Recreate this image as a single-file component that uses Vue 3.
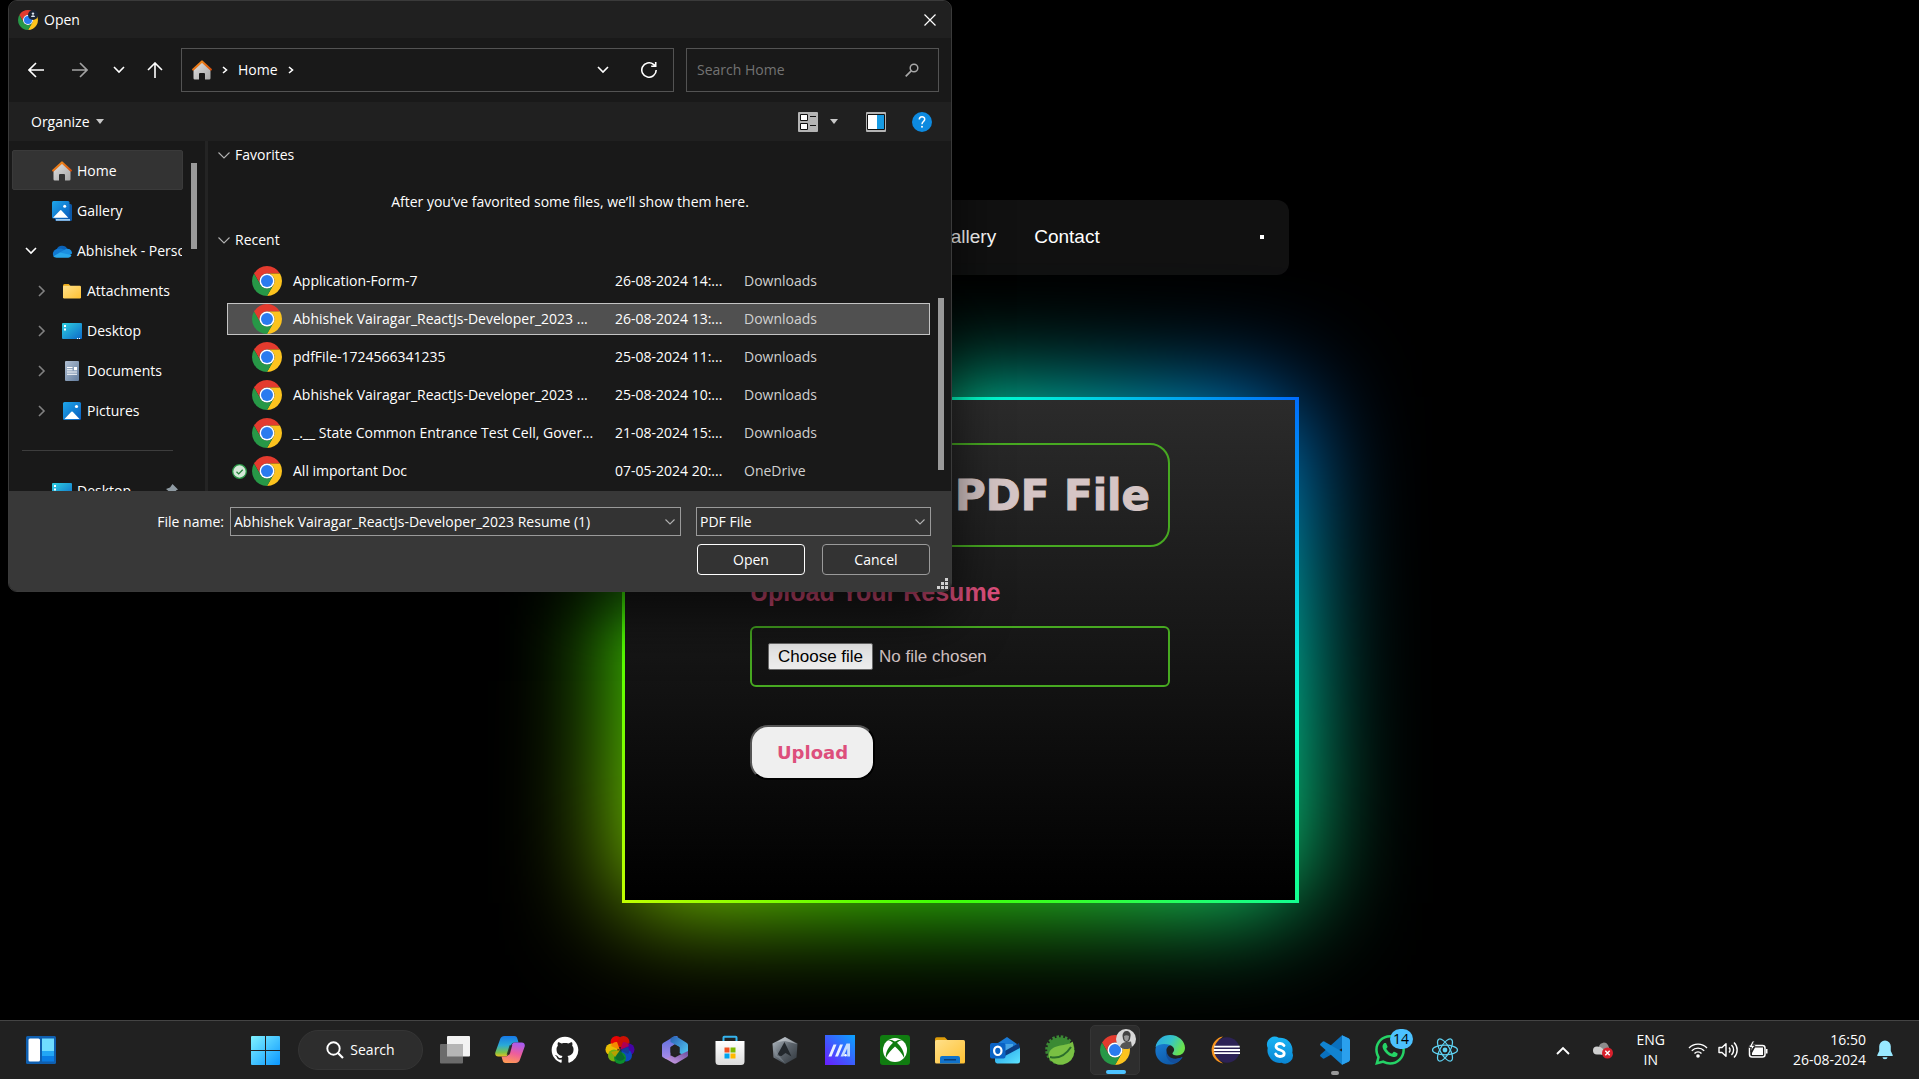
<script setup>
import { ref } from 'vue'

const picker = ref(null)
const fileName = ref('Abhishek Vairagar_ReactJs-Developer_2023 Resume (1)')

const places = [
  { label: 'Home', icon: 'house', active: true },
  { label: 'Gallery', icon: 'gallery' },
  { label: 'Abhishek - Personal', icon: 'onedrive', arrow: 'open' },
  { label: 'Attachments', icon: 'folder', arrow: 'closed', child: true },
  { label: 'Desktop', icon: 'desktop', arrow: 'closed', child: true },
  { label: 'Documents', icon: 'documents', arrow: 'closed', child: true },
  { label: 'Pictures', icon: 'pictures', arrow: 'closed', child: true },
]

const recent = [
  { name: 'Application-Form-7', date: '26-08-2024 14:...', place: 'Downloads' },
  { name: 'Abhishek Vairagar_ReactJs-Developer_2023 ...', date: '26-08-2024 13:...', place: 'Downloads', selected: true },
  { name: 'pdfFile-1724566341235', date: '25-08-2024 11:...', place: 'Downloads' },
  { name: 'Abhishek Vairagar_ReactJs-Developer_2023 ...', date: '25-08-2024 10:...', place: 'Downloads' },
  { name: '_.__ State Common Entrance Test Cell, Gover...', date: '21-08-2024 15:...', place: 'Downloads' },
  { name: 'All important Doc', date: '07-05-2024 20:...', place: 'OneDrive', synced: true },
]

const apps = [
  { id: 'taskview', label: 'Task view' },
  { id: 'copilot', label: 'Copilot' },
  { id: 'github', label: 'GitHub' },
  { id: 'flower', label: 'Photos' },
  { id: 'm365', label: 'Microsoft 365' },
  { id: 'store', label: 'Microsoft Store' },
  { id: 'armoury', label: 'Armoury Crate' },
  { id: 'myasus', label: 'MyASUS' },
  { id: 'xbox', label: 'Xbox' },
  { id: 'explorer', label: 'File Explorer' },
  { id: 'outlook', label: 'Outlook' },
  { id: 'spring', label: 'Spring Tools' },
  { id: 'chrome', label: 'Chrome', state: 'current' },
  { id: 'edge', label: 'Edge' },
  { id: 'eclipse', label: 'Eclipse' },
  { id: 'skype', label: 'Skype' },
  { id: 'vscode', label: 'VS Code', state: 'running' },
  { id: 'whatsapp', label: 'WhatsApp', badge: '14' },
  { id: 'react', label: 'React' },
]
</script>

<template>
  <div class="screen">
    <svg class="defs" width="0" height="0" aria-hidden="true">
      <defs>
        <linearGradient id="gRoof" x1="0" y1="0" x2="1" y2="1"><stop offset="0" stop-color="#f7931e" /><stop offset="1" stop-color="#d4500c" /></linearGradient>
        <linearGradient id="gWall" x1="0" y1="0" x2="1" y2="1"><stop offset="0" stop-color="#e2e2e2" /><stop offset="1" stop-color="#a8a8a8" /></linearGradient>
        <linearGradient id="gBlue" x1="0" y1="0" x2="1" y2="1"><stop offset="0" stop-color="#1ea7ea" /><stop offset="1" stop-color="#0a5cbd" /></linearGradient>
        <linearGradient id="gDesk" x1="0" y1="0" x2="1" y2="1"><stop offset="0" stop-color="#2fd0e0" /><stop offset="1" stop-color="#0c68c8" /></linearGradient>
        <linearGradient id="gDoc" x1="0" y1="0" x2="1" y2="1"><stop offset="0" stop-color="#b0bfd2" /><stop offset="1" stop-color="#637d9e" /></linearGradient>
        <linearGradient id="gFolder" x1="0" y1="0" x2="1" y2="1"><stop offset="0" stop-color="#ffe08a" /><stop offset="1" stop-color="#ffc132" /></linearGradient>
        <linearGradient id="gWin" x1="0" y1="0" x2="1" y2="1"><stop offset="0" stop-color="#80f2ff" /><stop offset="1" stop-color="#0a97ff" /></linearGradient>
        <linearGradient id="gCopA" x1="0" y1="0" x2="0" y2="1"><stop offset="0" stop-color="#1679e8" /><stop offset="0.45" stop-color="#2aa9d8" /><stop offset="0.8" stop-color="#7bc24a" /><stop offset="1" stop-color="#e8c020" /></linearGradient>
        <linearGradient id="gCopB" x1="0.6" y1="0" x2="0.3" y2="1"><stop offset="0" stop-color="#a95bee" /><stop offset="0.5" stop-color="#ee5d9c" /><stop offset="1" stop-color="#ff9a55" /></linearGradient>
        <linearGradient id="gM1" x1="0" y1="0" x2="0" y2="1"><stop offset="0" stop-color="#5b6fe0" /><stop offset="1" stop-color="#a98be8" /></linearGradient>
        <linearGradient id="gM2" x1="0" y1="0" x2="1" y2="1"><stop offset="0" stop-color="#2a5fb4" /><stop offset="1" stop-color="#54d0f7" /></linearGradient>
        <linearGradient id="gM3" x1="0" y1="1" x2="1" y2="0"><stop offset="0" stop-color="#d6a8ee" /><stop offset="1" stop-color="#6a4a9c" /></linearGradient>
        <linearGradient id="gArm" x1="0" y1="0" x2="1" y2="1"><stop offset="0" stop-color="#b9c2ca" /><stop offset="0.5" stop-color="#5c646c" /><stop offset="1" stop-color="#2f353b" /></linearGradient>
        <linearGradient id="gAsus" x1="0" y1="1" x2="1" y2="0"><stop offset="0" stop-color="#6a1cff" /><stop offset="1" stop-color="#0aa4ff" /></linearGradient>
        <linearGradient id="gOut" x1="0" y1="0" x2="1" y2="1"><stop offset="0" stop-color="#1c9be6" /><stop offset="1" stop-color="#5fe4ff" /></linearGradient>
        <linearGradient id="gEdgeA" x1="0" y1="0" x2="1" y2="0.4"><stop offset="0" stop-color="#2aa6e8" /><stop offset="0.55" stop-color="#35c4c8" /><stop offset="1" stop-color="#6ae24e" /></linearGradient>
        <linearGradient id="gEdgeB" x1="0" y1="0" x2="0.5" y2="1"><stop offset="0" stop-color="#1b84dd" /><stop offset="1" stop-color="#0f5aa8" /></linearGradient>
        <linearGradient id="gSkype" x1="0" y1="0" x2="0" y2="1"><stop offset="0" stop-color="#19b5f5" /><stop offset="1" stop-color="#0a84d2" /></linearGradient>
        <linearGradient id="gBag" x1="0" y1="0" x2="0" y2="1"><stop offset="0" stop-color="#ffffff" /><stop offset="1" stop-color="#dcdcdc" /></linearGradient>
      </defs>

      <symbol id="chrome" viewBox="0 0 48 48">
        <path fill="#e33b2e" d="M24 12h20.78A24 24 0 0 0 3.22 12l10.39 18A12 12 0 0 1 24 12z" />
        <path fill="#fcc31e" d="M34.39 30 24 48a24 24 0 0 0 20.78-36H24a12 12 0 0 1 10.39 18z" />
        <path fill="#279847" d="M13.61 30 3.22 12A24 24 0 0 0 24 48l10.39-18a12 12 0 0 1-20.78 0z" />
        <circle cx="24" cy="24" r="12" fill="#fff" /><circle cx="24" cy="24" r="9.6" fill="#2a7bef" />
      </symbol>
      <symbol id="house" viewBox="0 0 20 20">
        <path fill="url(#gWall)" d="M1.5 9 10 1.5 18.5 9v9.2a1.3 1.3 0 0 1-1.3 1.3H13V14a1 1 0 0 0-1-1H8a1 1 0 0 0-1 1v5.5H2.800a1.300 1.300 0 0 1-1.300-1.300z" />
        <path fill="none" stroke="url(#gRoof)" stroke-width="2.2" stroke-linecap="round" stroke-linejoin="round" d="m1.200 9.500 8.800-8 8.800 8" />
      </symbol>
      <symbol id="gallery" viewBox="0 0 20 20">
        <rect x="3" y="3" width="17" height="17" rx="1.5" fill="#0b58a8" /><path fill="#9cc9ee" d="M4 18h14v1.800H4z" />
        <rect width="17.5" height="17.5" rx="1.5" fill="url(#gBlue)" /><path fill="#fff" d="m1 16.800 7-7.300a1 1 0 0 1 1.500 0l6.800 7.300z" /><circle cx="12.7" cy="5.2" r="1.5" fill="#fff" />
      </symbol>
      <symbol id="pictures" viewBox="0 0 20 20">
        <rect x="1" y="1" width="18" height="18" rx="1.5" fill="url(#gBlue)" /><path fill="#fff" d="m2.500 18 6.800-7.200a1 1 0 0 1 1.400 0l6.800 7.200z" /><circle cx="14.5" cy="5.5" r="1.6" fill="#fff" />
      </symbol>
      <symbol id="onedrive" viewBox="0 0 20 20">
        <path fill="#0a62b8" d="M4.500 8.500A6 6 0 0 1 15.500 8l-6 6H3z" /><path fill="#1178d0" d="M4.800 8A5 5 0 0 0 2 16l8-2 3-5-4-1.500z" /><path fill="#1b8fe0" d="M20 12.500A4.500 4.500 0 0 0 13 8.500L7 12l8 4z" /><path fill="#29a8ec" d="M2.500 16.200a5 5 0 0 1-1-1L8 11.500 19.500 14a3.500 3.500 0 0 1-3.200 2.700H4.500a5 5 0 0 1-2-.5z" />
      </symbol>
      <symbol id="folder" viewBox="0 0 20 20">
        <path fill="#e9a918" d="M1 4.500A1.500 1.500 0 0 1 2.500 3h4.200L8.500 5v3H1z" /><rect x="1" y="4.8" width="18" height="12.7" rx="1.2" fill="url(#gFolder)" />
      </symbol>
      <symbol id="desktop" viewBox="0 0 20 20">
        <rect y="2" width="20" height="16" rx="1" fill="url(#gDesk)" /><path fill="#fff" d="M2 4h2v2H2zM2 7.500h2v2H2zM15 17h1v1h-1zM17 17h1v1h-1z" />
      </symbol>
      <symbol id="documents" viewBox="0 0 20 20">
        <rect x="3" width="14" height="20" rx="1" fill="url(#gDoc)" /><path fill="#fff" d="M5 6h5.500v1H5zM5 8.300h5.500v1H5zM12 6h3v3.300h-3zM5 10.600h10v1H5zM5 12.800h10v1H5z" />
      </symbol>

      <symbol id="widgets" viewBox="0 0 30 28">
        <rect width="30" height="28" rx="1.5" fill="#0f5fb0" /><rect x="2.5" y="2.5" width="11.5" height="23" rx="1.5" fill="#fff" /><path fill="#6fdcff" d="M16 2.500h12V15H16z" /><path fill="#22a6f5" d="M16 15h12v5H16z" /><path fill="#0a7de4" d="M16 20h12v5.500H16z" />
      </symbol>
      <symbol id="windows" viewBox="0 0 29 29">
        <path fill="url(#gWin)" d="M1 0h13v14H0V1a1 1 0 0 1 1-1zM15 0h13a1 1 0 0 1 1 1v13H15zM0 15h14v14H1a1 1 0 0 1-1-1zM15 15h14v13a1 1 0 0 1-1 1H15z" />
      </symbol>
      <symbol id="taskview" viewBox="0 0 30 30">
        <rect x="7" y="1" width="23" height="20.5" rx="1" fill="#f2f2f2" /><rect y="9" width="23" height="19.5" rx="1" fill="#6b6b6b" /><path fill="#b5b5b5" d="M7 9h16v12.500H7z" />
      </symbol>
      <symbol id="copilot" viewBox="0 0 30 30">
        <path fill="url(#gCopA)" d="M9.500 1h9.800c2 0 2.700 1.200 3.200 3l1 3.500h-3.800c-2 0-3.200 1-3.800 3l-2.700 8.500C12.500 21 11.300 21.500 9.500 21.500H3.300C.8 21.500-.3 19.500.4 17.200L5 4.500C5.700 2.200 7 1 9.500 1z" />
        <path fill="url(#gCopB)" d="M20.500 28h-9.800c-2 0-2.700-1.200-3.200-3l-1-3.500h3.800c2 0 3.200-1 3.800-3l2.700-8.500c.7-2 1.900-2.500 3.700-2.500h6.200c2.500 0 3.600 2 2.900 4.300L25 24.500c-.7 2.300-2 3.500-4.500 3.500z" />
        <path fill="#232323" d="M14.600 10.200h2.700L15 18.500c-.2.800-.7 1.200-1.400 1.200h-2z" opacity="0.85" />
      </symbol>
      <symbol id="github" viewBox="-1 -1 18 18">
        <path fill="#fff" d="M8 0C3.580 0 0 3.580 0 8c0 3.540 2.290 6.530 5.470 7.590.4.070.55-.17.55-.38 0-.19-.01-.82-.01-1.490-2.010.37-2.530-.49-2.690-.94-.09-.23-.48-.94-.82-1.130-.28-.15-.68-.52-.01-.53.63-.01 1.080.58 1.230.82.72 1.210 1.870.87 2.330.66.070-.52.280-.87.510-1.070-1.780-.2-3.640-.89-3.640-3.950 0-.87.310-1.590.820-2.150-.08-.2-.36-1.020.080-2.120 0 0 .67-.21 2.200.82.640-.18 1.320-.27 2-.27s1.360.09 2 .27c1.530-1.040 2.200-.82 2.200-.82.440 1.100.160 1.920.080 2.120.510.560.820 1.270.820 2.150 0 3.070-1.870 3.750-3.650 3.950.290.250.540.730.540 1.480 0 1.070-.01 1.930-.01 2.200 0 .21.150.46.550.38A8.010 8.010 0 0 0 16 8c0-4.420-3.580-8-8-8z" />
      </symbol>
      <symbol id="flower" viewBox="0 0 30 30">
        <g opacity="0.9"><circle cx="11.5" cy="7" r="6" fill="#f00" /><circle cx="18.5" cy="7" r="6" fill="#e01000" /><circle cx="23.5" cy="14.5" r="6" fill="#4a00b4" /><circle cx="6.5" cy="14.5" r="6" fill="#ffd000" /><circle cx="21" cy="20.5" r="6" fill="#0a4fd0" /><circle cx="9" cy="20.5" r="6" fill="#7cc010" /><circle cx="15" cy="23" r="6" fill="#0a9a30" /></g>
        <path fill="#f58a00" d="M15 15 6 11a6 6 0 0 1 6-4z" /><path fill="#b00050" d="m15 15 9-4a6 6 0 0 0-6-4z" /><path fill="#143a9a" d="m15 15 8 4a6 6 0 0 0 0-7z" /><path fill="#0b6a30" d="m15 15-5 8a6 6 0 0 0 10 0z" /><path fill="#b8a000" d="m15 15-9 2 4 5z" />
      </symbol>
      <symbol id="m365" viewBox="0 0 30 30">
        <path fill="url(#gM1)" d="M15 1 3.500 7.700A2.500 2.500 0 0 0 2 10v10.500c0 1 .5 1.700 1.300 2.100l2.200 1.200c2 1 5-.3 5-3.500V12l7-4.500V1z" /><path fill="url(#gM2)" d="M13.500 1.500a3 3 0 0 1 3 0L26.500 7.700A2.500 2.500 0 0 1 28 10v10.500l-2.500 1-6-3.500v-6L10.500 7V4c0-1.200 2-2 3-2.500z" /><path fill="url(#gM3)" d="M28 16v4.300c0 .8-.4 1.400-1 1.700l-10.500 6.300a3 3 0 0 1-3 0L4 22.800c3 1.200 5.500-.3 6.500-2.500l4.500 2.200 4.500-2.500z" /><path fill="#232323" d="m15 9.800 4.500 2.600v5.200L15 20.200l-4.500-2.600v-5.200z" />
      </symbol>
      <symbol id="store" viewBox="0 0 30 30">
        <path fill="none" stroke="#35b4ee" stroke-width="2" d="M8.500 7V2.500a.8.800 0 0 1 .8-.8h11.400a.8.800 0 0 1 .8.800V7" /><path fill="url(#gBag)" d="M.5 6h29v20.500A3.500 3.500 0 0 1 26 30H4a3.500 3.500 0 0 1-3.500-3.500z" /><path fill="#f25022" d="M9.500 12.500h5v5h-5z" /><path fill="#7fba00" d="M15.500 12.500h5v5h-5z" /><path fill="#00a4ef" d="M9.500 18.500h5v5h-5z" /><path fill="#ffb900" d="M15.500 18.500h5v5h-5z" />
      </symbol>
      <symbol id="armoury" viewBox="0 0 30 30">
        <path fill="url(#gArm)" d="m15 2 12.500 6.500-1 14L15 29 3.500 22.500l-1-14z" /><path fill="#23282d" d="M14.500 7 7 20.500l4.500.5 4-3 6 3.500z" /><path fill="#8c959d" d="m2.500 9 3 12L15 28l-6-7.500z" opacity="0.5" /><path fill="#dfe4e8" d="m15 2-8 5 8-1 12 3z" opacity="0.5" />
      </symbol>
      <symbol id="myasus" viewBox="0 0 30 30">
        <path fill="url(#gAsus)" d="M0 0h30v30H0z" /><path fill="#e8f0ff" d="m3.500 21.500 5-12h3l-5 12zM10 21.500l5-12h3l-5 12z" /><path fill="#c4dcff" d="M15.500 21.500 21.500 8.500H25v13h-2.800v-8l-3.700 8z" /><circle cx="20.5" cy="20.3" r="1.3" fill="#fff" />
      </symbol>
      <symbol id="xbox" viewBox="0 0 30 30">
        <rect width="30" height="30" rx="3" fill="#107c10" /><circle cx="15" cy="15" r="12" fill="#fff" /><path fill="#107c10" d="M7.500 5.200C10 4 12.500 5 15 6.600 17.500 5 20 4 22.500 5.200c-2-.2-4.200 1.300-5.500 2.600 4 3.700 7.500 8.700 7.200 15.200-2-4.500-5.800-8.500-9.200-11.500-3.400 3-7.200 7-9.200 11.500C5.500 16.500 9 11.500 13 7.800 11.700 6.500 9.500 5 7.500 5.200z" />
      </symbol>
      <symbol id="explorer" viewBox="0 0 30 30">
        <path fill="#dd9c0a" d="M0 4a1.800 1.800 0 0 1 1.800-1.800h8L12.500 5v4H0z" /><rect y="5" width="30" height="23.5" rx="1.5" fill="url(#gFolder)" /><path fill="#1173cc" d="M5 28.500V23a2 2 0 0 1 2-2h16a2 2 0 0 1 2 2v5.500z" /><path fill="#0a3f78" d="M9 24h12v1.500H9z" />
      </symbol>
      <symbol id="outlook" viewBox="0 0 30 30">
        <path fill="#1a7bd6" d="M5 10 17 2l12 8.500v5H5z" /><path fill="#8ee5ff" d="M8 9h15v9H8z" opacity="0.4" /><path fill="url(#gOut)" d="M5 17 30 12v14a2.500 2.500 0 0 1-2.500 2.500H7A2.500 2.500 0 0 1 5 26z" /><path fill="#0a3c82" d="m13 17 16-9 1 5-17 9z" /><rect y="8" width="15.5" height="15.5" rx="2" fill="#0a62c4" /><ellipse cx="7.8" cy="15.8" rx="3.7" ry="4.2" fill="none" stroke="#fff" stroke-width="2.2" />
      </symbol>
      <symbol id="spring" viewBox="0 0 30 30">
        <circle cx="15" cy="15" r="12.8" fill="#3b8a34" /><circle cx="15" cy="15" r="13.3" fill="none" stroke="#3b8a34" stroke-width="3" stroke-dasharray="2.5 1.7" /><path fill="#232323" d="M30 8v6l-5 3-1-9z" opacity="0.5" /><path fill="#79c043" d="M27.500 6.500C22 12 8 8 4 18c-1 3 0 6.500 3 8.500a13.500 13.500 0 0 0 22-8c.7-4-.2-8.500-1.500-12z" /><path fill="none" stroke="#2b6e2c" stroke-width="2" d="M5 22c8 2 15-1 21-10" />
      </symbol>
      <symbol id="edge" viewBox="0 0 30 30">
        <path fill="url(#gEdgeB)" d="M1 11.500C3 4 9 1 15 2c6 1 8 6 7 9.500-4-4-12-1-10.500 6C12.500 23 18 26.500 27.500 22 23 29.500 15 31 9 28.500 2 25.500-1 18.500 1 11.500z" /><path fill="url(#gEdgeA)" d="M.5 12C2 4.500 8 0 15 0c9 0 15 6.500 15 13 0 4.500-3.500 7.500-8 7.500-3 0-5-1-4.500-2.500C19 16.500 20 14.500 18 12 15 8.500 5 7.500.5 12z" /><path fill="#134f9c" d="M11.500 14C9.500 20.500 13 27.500 20 28.500c3-1 6-3.500 7.500-6.500-9 4-16.500.5-16-8z" />
      </symbol>
      <symbol id="eclipse" viewBox="0 0 30 30">
        <path fill="#f7941e" d="M13 1.500a13.700 13.700 0 0 0 0 27 16 16 0 0 1 0-27z" /><circle cx="17" cy="15" r="12.8" fill="#2c2255" /><path fill="#fff" d="M4.300 10.800h25.400v1.800H4zM3.800 14h26.400v1.900H3.800zM4 17.300h26v1.800H4.300z" />
      </symbol>
      <symbol id="skype" viewBox="0 0 30 30">
        <path fill="url(#gSkype)" d="M9.500 1.500a8 8 0 0 1 4.300 1.200A12.500 12.500 0 0 1 27.300 17.500 8 8 0 0 1 16.500 27.800 12.500 12.500 0 0 1 2.700 13 8 8 0 0 1 9.500 1.500z" /><path fill="none" stroke="#fff" stroke-width="2.8" stroke-linecap="round" d="M19 10.500c-1-1.500-2.300-2-4-2-2.200 0-4 1-4 3 0 4.500 8.200 2.500 8.200 7 0 2-1.800 3-4.200 3-2 0-3.500-.8-4.300-2.500" />
      </symbol>
      <symbol id="vscode" viewBox="0 0 30 30">
        <path fill="#0a70bd" d="M22 .2 29 3.500v6L4.200 23.500a1.500 1.500 0 0 1-1.600-.2L.6 21.500a1.300 1.300 0 0 1 0-1.900z" /><path fill="#1183d0" d="M22 29.800 29 26.500v-6L4.200 6.500a1.500 1.500 0 0 0-1.600.2L.6 8.500a1.300 1.300 0 0 0 0 1.900z" /><path fill="#2aa0ee" d="M22 .2 28.900 3.400A2 2 0 0 1 30 5.200v19.600a2 2 0 0 1-1.100 1.800L22 29.800z" />
      </symbol>
      <symbol id="whatsapp" viewBox="0 0 24 24">
        <path fill="#25d366" d="M17.472 14.382c-.297-.149-1.758-.867-2.030-.967-.273-.099-.471-.148-.67.150-.197.297-.767.966-.94 1.164-.173.199-.347.223-.644.075-.297-.15-1.255-.463-2.390-1.475-.883-.788-1.480-1.761-1.653-2.059-.173-.297-.018-.458.130-.606.134-.133.298-.347.446-.52.149-.174.198-.298.298-.497.099-.198.050-.371-.025-.52-.075-.149-.669-1.612-.916-2.207-.242-.579-.487-.5-.669-.51-.173-.008-.371-.01-.57-.01-.198 0-.52.074-.792.372-.272.297-1.040 1.016-1.040 2.479 0 1.462 1.065 2.875 1.213 3.074.149.198 2.096 3.200 5.077 4.487.709.306 1.262.489 1.694.625.712.227 1.360.195 1.871.118.571-.085 1.758-.719 2.006-1.413.248-.694.248-1.289.173-1.413-.074-.124-.272-.198-.57-.347m-5.421 7.403h-.004a9.870 9.870 0 0 1-5.031-1.378l-.361-.214-3.741.982.998-3.648-.235-.374a9.860 9.860 0 0 1-1.510-5.260c.001-5.450 4.436-9.884 9.888-9.884 2.640 0 5.122 1.030 6.988 2.898a9.825 9.825 0 0 1 2.893 6.994c-.003 5.450-4.437 9.884-9.885 9.884m8.413-18.297A11.815 11.815 0 0 0 12.050 0C5.495 0 .160 5.335.157 11.892c0 2.096.547 4.142 1.588 5.945L.057 24l6.305-1.654a11.882 11.882 0 0 0 5.683 1.448h.005c6.554 0 11.890-5.335 11.893-11.893a11.821 11.821 0 0 0-3.480-8.413z" />
      </symbol>
      <symbol id="react" viewBox="-15 -15 30 30">
        <circle r="2.4" fill="#5fd3f3" /><g fill="none" stroke="#5fd3f3" stroke-width="1.2"><ellipse rx="12.5" ry="4.8" /><ellipse rx="12.5" ry="4.8" transform="rotate(60)" /><ellipse rx="12.5" ry="4.8" transform="rotate(120)" /></g>
      </symbol>
    </svg>

    <main class="page">
      <div class="column">
        <nav class="nav">
          <a href="#">Gallery</a><a href="#">Contact</a>
          <span class="dot"></span>
        </nav>

        <section class="card">
          <form class="card-body" @submit.prevent>
            <h1 class="title">Upload PDF File</h1>
            <label class="field-label" for="resume">Upload Your Resume</label>
            <div class="file-box">
              <input id="resume" ref="picker" class="file-input" type="file" accept="application/pdf" />
              <button class="choose" type="button" @click="picker.click()">Choose file</button>
              <span>No file chosen</span>
            </div>
            <button class="upload" type="submit">Upload</button>
          </form>
        </section>
      </div>
    </main>

    <div class="dialog" role="dialog" aria-label="Open">
      <header class="titlebar">
        <span class="title-icon">
          <svg width="20" height="20"><use href="#chrome" /></svg>
          <svg class="avatar" width="10" height="10" viewBox="0 0 10 10"><circle cx="5" cy="5" r="5" fill="#1b2434" /><circle cx="5" cy="3.6" r="1.2" fill="#dfe6f0" /><path fill="#dfe6f0" d="M3 7a2 1.800 0 0 1 4 0z" /></svg>
        </span>
        <span>Open</span>
        <button class="close" type="button" aria-label="Close"><svg width="12" height="12" viewBox="0 0 12 12"><path d="m.5.500 11 11M11.500.500l-11 11" stroke="#fff" stroke-width="1.2" /></svg></button>
      </header>

      <div class="nav-row">
        <button type="button" aria-label="Back"><svg width="16" height="16" viewBox="0 0 16 16"><path class="ln" d="M16 8H1M8 1 1 8l7 7" /></svg></button>
        <button type="button" class="off" aria-label="Forward"><svg width="16" height="16" viewBox="0 0 16 16"><path class="ln" d="M0 8h15M8 1l7 7-7 7" /></svg></button>
        <button type="button" class="mid" aria-label="Recent locations"><svg width="12" height="8" viewBox="0 0 12 8"><path class="ln" d="m1 1 5 5 5-5" /></svg></button>
        <button type="button" class="up" aria-label="Up"><svg width="16" height="16" viewBox="0 0 16 16"><path class="ln" d="M8 16V1M1 8l7-7 7 7" /></svg></button>
        <div class="address">
          <svg width="20" height="20"><use href="#house" /></svg>
          <svg class="crumb" width="6" height="8" viewBox="0 0 6 8"><path class="ln" d="m1 1 3.500 3L1 7" /></svg>
          <span>Home</span>
          <svg class="crumb" width="6" height="8" viewBox="0 0 6 8"><path class="ln" d="m1 1 3.500 3L1 7" /></svg>
          <button type="button" class="drop" aria-label="Previous locations"><svg width="12" height="8" viewBox="0 0 12 8"><path class="ln" d="m1 1 5 5 5-5" /></svg></button>
          <button type="button" aria-label="Refresh"><svg width="16" height="16" viewBox="0 0 16 16"><path class="ln" d="M15.200 8A7.200 7.200 0 1 1 12.500 2.400L14.500 4M14.700 0v4.300h-4.500" /></svg></button>
        </div>
        <div class="search">
          <input type="text" placeholder="Search Home" aria-label="Search Home" />
          <svg width="14" height="14" viewBox="0 0 14 14"><circle cx="9" cy="5" r="3.8" fill="none" stroke="#a8a8a8" stroke-width="1.5" /><path d="M6.200 7.800.7 13.300" stroke="#a8a8a8" stroke-width="1.7" /></svg>
        </div>
      </div>

      <div class="tools">
        <button type="button" class="organize">Organize<i class="caret"></i></button>
        <button type="button" class="view" aria-label="Change view">
          <svg width="20" height="20" viewBox="0 0 20 20"><rect width="20" height="20" rx="1" fill="#b4b4b4" /><path fill="#fff" stroke="#111" stroke-width="1" d="M2.500 2.500h7v6h-7zM2.500 11.500h7v6h-7z" /><path stroke="#111" d="M12 4.500h6M12 13.500h6" /></svg>
          <i class="caret"></i>
        </button>
        <button type="button" class="pane-btn" aria-label="Preview pane"><svg width="20" height="20" viewBox="0 0 20 20"><rect width="20" height="20" rx="1" fill="#b4b4b4" /><path fill="#fff" stroke="#111" d="M1.500 2.500h17v15h-17z" /><path fill="#179be3" d="M11 3h7v14h-7z" /></svg></button>
        <button type="button" aria-label="Help"><svg width="20" height="20" viewBox="0 0 20 20"><circle cx="10" cy="10" r="10" fill="#0d8ae0" /><path fill="none" stroke="#fff" stroke-width="1.5" d="M7.300 7.500c0-3.500 5.400-3.500 5.400-.2 0 2.200-2.700 2.400-2.700 5" /><circle cx="10" cy="14.800" r="1" fill="#fff" /></svg></button>
      </div>

      <div class="body">
        <aside class="side">
          <ul class="places">
            <li v-for="p in places" :key="p.label">
              <a href="#" class="place" :class="{ active: p.active, child: p.child }">
                <span class="twist">
                  <svg v-if="p.arrow === 'open'" width="12" height="8" viewBox="0 0 12 8"><path class="ln" d="m1 1 5 5 5-5" /></svg>
                  <svg v-if="p.arrow === 'closed'" class="dim" width="8" height="12" viewBox="0 0 8 12"><path class="ln" d="m1 1 5 5-5 5" /></svg>
                </span>
                <svg class="pic" width="20" height="20"><use :href="'#' + p.icon" /></svg>
                <span>{{ p.label }}</span>
              </a>
            </li>
            <li class="rule"></li>
            <li>
              <a href="#" class="place">
                <span class="twist"></span>
                <svg class="pic" width="20" height="20"><use href="#desktop" /></svg>
                <span>Desktop</span>
                <svg class="pin" width="12" height="14" viewBox="0 0 12 14"><path fill="#8f9ba3" d="M6.500 0 12 5.500l-2 1-2 5L0 5l4-1.500z" /></svg>
              </a>
            </li>
          </ul>
          <span class="thumb side-thumb"></span>
        </aside>

        <div class="files">
          <h2 class="group"><svg width="12" height="7" viewBox="0 0 12 7"><path class="ln thin" d="m.5.500 5.500 5.500L11.500.500" /></svg>Favorites</h2>
          <p class="empty">After you’ve favorited some files, we’ll show them here.</p>
          <h2 class="group"><svg width="12" height="7" viewBox="0 0 12 7"><path class="ln thin" d="m.5.500 5.500 5.500L11.500.500" /></svg>Recent</h2>
          <table class="recent">
            <tbody>
              <tr v-for="(f, i) in recent" :key="i" :class="{ selected: f.selected }">
                <td class="c-icon">
                  <div class="icons">
                    <span class="sync"><svg v-if="f.synced" width="15" height="15" viewBox="0 0 15 15"><circle cx="7.5" cy="7.5" r="6.8" fill="#d5e8d8" stroke="#2c9a48" stroke-width="1.3" /><path d="m4.500 7.700 2.200 2.200 4-4.200" fill="none" stroke="#23803a" stroke-width="1.3" /></svg></span>
                    <svg width="30" height="30"><use href="#chrome" /></svg>
                  </div>
                </td>
                <td class="c-name">{{ f.name }}</td>
                <td class="c-date">{{ f.date }}</td>
                <td class="c-place">{{ f.place }}</td>
              </tr>
            </tbody>
          </table>
        </div>
        <span class="thumb files-thumb"></span>
      </div>

      <footer class="foot">
        <div class="foot-row">
          <label class="name-label" for="fname">File name:</label>
          <div class="combo name-combo">
            <input id="fname" v-model="fileName" type="text" />
            <svg width="10" height="6" viewBox="0 0 10 6"><path class="ln thin" d="m.5.500 4.500 4.500L9.500.500" /></svg>
          </div>
          <div class="combo type-combo">
            <select aria-label="File type"><option>PDF File</option></select>
            <svg width="10" height="6" viewBox="0 0 10 6"><path class="ln thin" d="m.5.500 4.500 4.500L9.500.500" /></svg>
          </div>
        </div>
        <div class="foot-row actions">
          <button type="button" class="primary">Open</button>
          <button type="button">Cancel</button>
        </div>
        <svg class="grip" width="11" height="11" viewBox="0 0 11 11"><path fill="#d0d0d0" d="M8 0h3v3H8zM4 4h3v3H4zM8 4h3v3H8zM0 8h3v3H0zM4 8h3v3H4zM8 8h3v3H8z" /></svg>
      </footer>
    </div>

    <footer class="taskbar">
      <button type="button" class="widgets" aria-label="Widgets"><svg width="30" height="28"><use href="#widgets" /></svg></button>
      <button type="button" class="app start" aria-label="Start"><svg width="29" height="29"><use href="#windows" /></svg></button>
      <button type="button" class="pill">
        <svg width="18" height="18" viewBox="0 0 18 18"><circle cx="7.5" cy="7.5" r="6.2" fill="none" stroke="#fff" stroke-width="1.9" /><path d="m12 12 5 5" stroke="#fff" stroke-width="2.2" /></svg>
        Search
      </button>
      <button v-for="a in apps" :key="a.id" type="button" class="app" :class="a.state" :aria-label="a.label">
        <span class="tile">
          <svg width="30" height="30"><use :href="'#' + a.id" /></svg>
          <svg v-if="a.id === 'chrome'" class="face" width="20" height="20" viewBox="0 0 20 20"><circle cx="10" cy="10" r="10" fill="#d8d8d8" /><path fill="#444" d="M6.500 7c0-3 1.500-5 4-5s4.500 2 4 5l-.5 3c-.5 2-1.800 3-3.500 3S7.500 12 7 10z" /><path fill="#999" d="M8 7c1.500-1 3.500-1 5 0l-.4 3c-.3 1.300-1.200 2-2.100 2s-1.900-.7-2.100-2z" /><path fill="#555" d="M4 18c.5-3 3-4.500 6-5l5-.5 1 5.500a10 10 0 0 1-12 0z" /></svg>
          <span v-if="a.badge" class="badge">{{ a.badge }}</span>
        </span>
      </button>

      <div class="tray">
        <button type="button" aria-label="Show hidden icons"><svg width="14" height="9" viewBox="0 0 14 9"><path d="m1 8 6-6 6 6" fill="none" stroke="#fff" stroke-width="1.9" /></svg></button>
        <svg class="cloud" width="20" height="18" viewBox="0 0 20 18"><path fill="#8c8c8c" d="M6 5a5 5 0 0 1 9-1l2 5-9 5z" /><path fill="#cfcfcf" d="M4 13.500a4 4 0 0 1 0-8c3 0 5 1 7 3.500v4.500z" /><circle cx="14.5" cy="12" r="5.5" fill="#d8202c" /><path d="m12.300 9.800 4.400 4.400M16.700 9.800l-4.400 4.400" stroke="#fff" stroke-width="1.4" /></svg>
        <div class="lang"><span>ENG</span><span>IN</span></div>
        <div class="status">
          <svg width="20" height="16" viewBox="0 0 20 16"><g fill="none" stroke="#fff" stroke-width="1.4"><path d="M1 6a12.500 12.500 0 0 1 18 0M3.800 8.700a8.700 8.700 0 0 1 12.400 0M6.500 11.400a5 5 0 0 1 7 0" /></g><circle cx="10" cy="14" r="1.8" fill="#fff" /></svg>
          <svg width="20" height="18" viewBox="0 0 20 18"><g fill="none" stroke="#fff" stroke-width="1.4"><path d="M1 6.500h3L8 2.800v12.400L4 11.500H1z" stroke-linejoin="round" /><path d="M11 6.500a3.500 3.500 0 0 1 0 5M13.500 4a7 7 0 0 1 0 10M16 1.500a10.500 10.500 0 0 1 0 15" /></g></svg>
          <svg width="20" height="18" viewBox="0 0 20 18"><rect x="1.5" y="4.5" width="15.5" height="11.5" rx="2.5" fill="none" stroke="#fff" stroke-width="1.5" /><path fill="#fff" d="M7 6.500h8V14H4v-2zM18 8h1.500v4.500H18z" /><path fill="#fff" stroke="#222" stroke-width="0.8" d="M4.500 0 .8 6.500h2.700l-1 4L7 4.500H4.300L6.500 0z" /></svg>
        </div>
        <div class="clock"><span>16:50</span><span>26-08-2024</span></div>
        <svg width="16" height="20" viewBox="0 0 16 20"><path fill="#98e8ff" d="M8 .5a5.800 5.800 0 0 0-5.800 5.800V11L.3 15v1h15.400v-1l-1.900-4V6.300A5.800 5.800 0 0 0 8 .5zM5.500 17.200h5a2.500 2 0 0 1-5 0z" /></svg>
      </div>
    </footer>
  </div>
</template>

<style>
body {
  background: #000;
}
</style>

<style scoped>
.screen {
  --ui: "Segoe UI", "Open Sans", "Noto Sans", sans-serif;
  --web: Arial, "Liberation Sans", sans-serif;
  --heavy: "Arial Black", "DejaVu Sans", sans-serif;
  position: relative;
  display: flex;
  flex-direction: column;
  min-height: 100vh;
  overflow: hidden;
  background: #000;
  color: #fff;
  font: 14px/20px var(--ui);
}
.screen *,
.screen *::before,
.screen *::after {
  box-sizing: border-box;
}
.defs {
  position: absolute;
}
button {
  display: flex;
  align-items: center;
  justify-content: center;
  padding: 0;
  border: 0;
  background: none;
  color: inherit;
  font: inherit;
}
a {
  color: inherit;
  text-decoration: none;
}
svg {
  flex: none;
}
.ln {
  fill: none;
  stroke: #fff;
  stroke-width: 1.6;
}
.thin {
  stroke: #b0b0b0;
  stroke-width: 1.1;
}

/* web page */
.page {
  flex: 1;
  padding: 200px 14px 116px 16px;
  font-family: var(--web);
}
.column {
  width: 100%;
  max-width: 677px;
  margin: 0 auto;
}
.nav {
  display: flex;
  align-items: center;
  gap: 38px;
  height: 75px;
  margin-right: 10px;
  padding: 0 25px 2px 314px;
  border-radius: 12px;
  background: #111;
  font-size: 19px;
}
.dot {
  width: 4px;
  height: 4px;
  margin-left: auto;
  background: #fff;
}
.card {
  position: relative;
  z-index: 0;
  margin-top: 122px;
}
.card::before,
.card::after {
  content: "";
  position: absolute;
  inset: 0;
  z-index: -1;
  background: linear-gradient(45deg, #ccff00 0%, #40ff00 27%, #38ff20 38%, #14ff90 57%, #00ffd0 72%, #00dde0 79%, #00a0f0 89%, #0060ff 100%);
}
.card::after {
  filter: blur(56px);
}
.card-body {
  display: flex;
  flex-direction: column;
  align-items: flex-start;
  min-height: 506px;
  padding: 43px 125px;
  border: solid transparent;
  border-width: 3px 4px 3px 3px;
  background: linear-gradient(0deg, #000, #2b2b2b) padding-box;
}
.title {
  width: 100%;
  margin: 0;
  padding: 21px 18px 19px;
  border: 2px solid #47a921;
  border-radius: 20px;
  color: #d5c5c5;
  font: 900 42px/60px var(--heavy);
  text-align: right;
  white-space: nowrap;
  -webkit-text-stroke: 1px #d5c5c5;
}
.field-label {
  margin-top: 31px;
  color: #dd4f7c;
  font-size: 25px;
  font-weight: 700;
  line-height: 28px;
}
.file-box {
  position: relative;
  display: flex;
  align-items: center;
  gap: 6px;
  width: 100%;
  height: 61px;
  margin-top: 20px;
  padding: 0 16px;
  border: 2px solid #47a921;
  border-radius: 6px;
  color: #d5c5c5;
  font-size: 17px;
}
.file-input {
  position: absolute;
  width: 1px;
  height: 1px;
  opacity: 0;
}
.choose {
  height: 27px;
  padding: 0 9px;
  border: 1px solid #6b6b6b;
  border-radius: 2px;
  background: #efefef;
  color: #000;
}
.upload {
  height: 55px;
  margin-top: 38px;
  padding: 0 25px;
  border: 2px outset #000;
  border-color: #555 #000 #000 #555;
  border-radius: 18px;
  background: #efefef;
  color: #dd4f7c;
  font: 900 18px/24px var(--heavy);
}

/* file dialog */
.dialog {
  position: absolute;
  top: 0;
  left: 8px;
  width: 944px;
  border: 1px solid #3a3a3a;
  border-radius: 9px;
  overflow: hidden;
  background: #191919;
  box-shadow: 0 24px 54px rgba(0, 0, 0, 0.65);
}
.titlebar {
  display: flex;
  align-items: center;
  gap: 6px;
  height: 37px;
  padding-left: 9px;
  background: #202020;
}
.title-icon {
  position: relative;
  display: flex;
}
.avatar {
  position: absolute;
  top: 0;
  right: 0;
}
.close {
  width: 42px;
  height: 100%;
  margin-left: auto;
}
.nav-row {
  display: flex;
  align-items: center;
  height: 64px;
  padding: 0 12px 0 5px;
}
.nav-row > button {
  width: 44px;
  height: 44px;
}
.nav-row > .off {
  opacity: 0.6;
}
.nav-row > .mid {
  width: 34px;
}
.nav-row > .up {
  width: 38px;
}
.address,
.search {
  display: flex;
  align-items: center;
  height: 44px;
  border: 1px solid #535353;
}
.address {
  flex: 1;
  margin: 0 12px 0 7px;
  padding: 0 16px 0 10px;
}
.crumb {
  margin: 0 10px;
}
.drop {
  margin: 0 32px 0 auto;
}
.search {
  width: 253px;
  padding: 0 19px 0 10px;
}
.search input {
  flex: 1;
  min-width: 0;
  padding: 0;
  border: 0;
  background: none;
  color: #fff;
  font: inherit;
}
.search input::placeholder {
  color: #737373;
  opacity: 1;
}
.tools {
  display: flex;
  align-items: center;
  height: 39px;
  padding: 0 19px 0 22px;
  background: #202020;
}
.organize {
  gap: 6px;
  margin-right: auto;
}
.caret {
  border: 4px solid transparent;
  border-top: 5px solid #c8c8c8;
  border-bottom: 0;
}
.view {
  gap: 12px;
  margin-right: 28px;
}
.pane-btn {
  margin-right: 26px;
}
.body {
  display: flex;
  height: 350px;
  overflow: hidden;
}
.side {
  display: flex;
  flex: none;
  gap: 8px;
  width: 199px;
  padding: 9px 0 0 3px;
  border-right: 3px solid #242424;
}
.places {
  width: 171px;
  margin: 0;
  padding: 0;
  list-style: none;
}
.place {
  display: flex;
  align-items: center;
  height: 40px;
  padding-top: 2px;
  padding-left: 12px;
  border: 1px solid transparent;
  border-radius: 2px;
  overflow: hidden;
  white-space: nowrap;
}
.place.active {
  border-color: #3a3a3a;
  background: #333;
}
.place.child {
  padding-left: 22px;
}
.twist {
  display: flex;
  flex: none;
  justify-content: flex-start;
  width: 27px;
}
.child .twist {
  padding-left: 3px;
}
.dim {
  opacity: 0.45;
}
.pic {
  margin-right: 5px;
}
.pin {
  margin: 0 4px 0 auto;
}
.rule {
  display: flex;
  align-items: center;
  height: 40px;
  padding: 0 10px;
}
.rule::before {
  content: "";
  flex: 1;
  height: 1px;
  background: #3d3d3d;
}
.thumb {
  flex: none;
  width: 6px;
  background: #9a9a9a;
}
.side-thumb {
  height: 86px;
  margin-top: 13px;
}
.files {
  flex: 1;
  min-width: 0;
  padding-left: 10px;
}
.group {
  display: flex;
  align-items: center;
  gap: 5px;
  height: 28px;
  margin: 0;
  font: inherit;
}
.empty {
  margin: 0;
  padding: 23px 8px 14px 0;
  text-align: center;
}
.recent {
  width: 100%;
  margin-top: 5px;
  padding-left: 9px;
  border-spacing: 0 6px;
  table-layout: fixed;
}
.recent td {
  height: 32px;
  padding: 0;
  white-space: nowrap;
}
.selected {
  outline: 1px solid #c4c4c4;
  outline-offset: -1px;
  background: #505050;
}
.c-icon {
  width: 66px;
}
.c-name {
  width: 322px;
}
.c-date {
  width: 129px;
}
.c-place {
  color: #d0d0d0;
}
.icons {
  display: flex;
  align-items: center;
  gap: 5px;
  padding-left: 5px;
}
.sync {
  display: flex;
  width: 15px;
}
.files-thumb {
  height: 172px;
  margin: 157px 7px 0 8px;
}
.foot {
  position: relative;
  padding: 16px 20px 16px 9px;
  background: #383838;
}
.foot-row {
  display: flex;
  align-items: center;
}
.name-label {
  margin-left: auto;
}
.combo {
  position: relative;
  display: flex;
  align-items: center;
  height: 29px;
  border: 1px solid #9a9a9a;
}
.combo input,
.combo select {
  width: 100%;
  height: 100%;
  padding: 0 24px 0 3px;
  border: 0;
  appearance: none;
  background: #333;
  color: #fff;
  font: inherit;
}
.combo svg {
  position: absolute;
  right: 5px;
}
.name-combo {
  width: 451px;
  margin: 0 15px 0 6px;
}
.type-combo {
  width: 235px;
}
.actions {
  justify-content: flex-end;
  gap: 17px;
  margin-top: 8px;
  padding-right: 1px;
}
.actions button {
  width: 108px;
  height: 31px;
  border: 1px solid #9a9a9a;
  border-radius: 4px;
  background: #333;
}
.actions .primary {
  border-color: #fff;
}
.grip {
  position: absolute;
  right: 3px;
  bottom: 2px;
}

/* taskbar */
.taskbar {
  position: relative;
  display: flex;
  align-items: center;
  height: 59px;
  padding: 0 26px;
  border-top: 1px solid #444;
  background: #212121;
}
.start {
  margin-left: 182px;
}
.pill {
  gap: 6px;
  width: 125px;
  height: 40px;
  margin: 0 4px 0 5px;
  border: 1px solid #353535;
  border-radius: 20px;
  background: #2d2d2d;
}
.app {
  position: relative;
  width: 55px;
  height: 100%;
}
.tile {
  position: relative;
  display: flex;
  align-items: center;
  justify-content: center;
  width: 50px;
  height: 50px;
  border-radius: 5px;
}
.current .tile {
  border: 1px solid #353535;
  background: #2d2d2d;
}
.current .tile::after,
.running .tile::after {
  content: "";
  position: absolute;
  bottom: 0;
  left: 15px;
  width: 20px;
  height: 4px;
  border-radius: 2px;
  background: #4cc2ff;
}
.running .tile::after {
  left: 21px;
  width: 8px;
  background: #9a9a9a;
}
.face {
  position: absolute;
  top: 3px;
  right: 3px;
}
.badge {
  position: absolute;
  top: 4px;
  right: 2px;
  width: 23px;
  border-radius: 10px;
  background: #4cc2ff;
  color: #000;
  text-align: center;
}
.tray {
  display: flex;
  align-items: center;
  margin-left: auto;
}
.cloud {
  margin: 0 24px 0 23px;
}
.lang,
.clock {
  display: flex;
  flex-direction: column;
}
.lang {
  align-items: center;
}
.status {
  display: flex;
  align-items: center;
  gap: 10px;
  margin: 0 20px 0 23px;
}
.clock {
  align-items: flex-end;
  min-width: 78px;
  margin-right: 11px;
}
</style>
